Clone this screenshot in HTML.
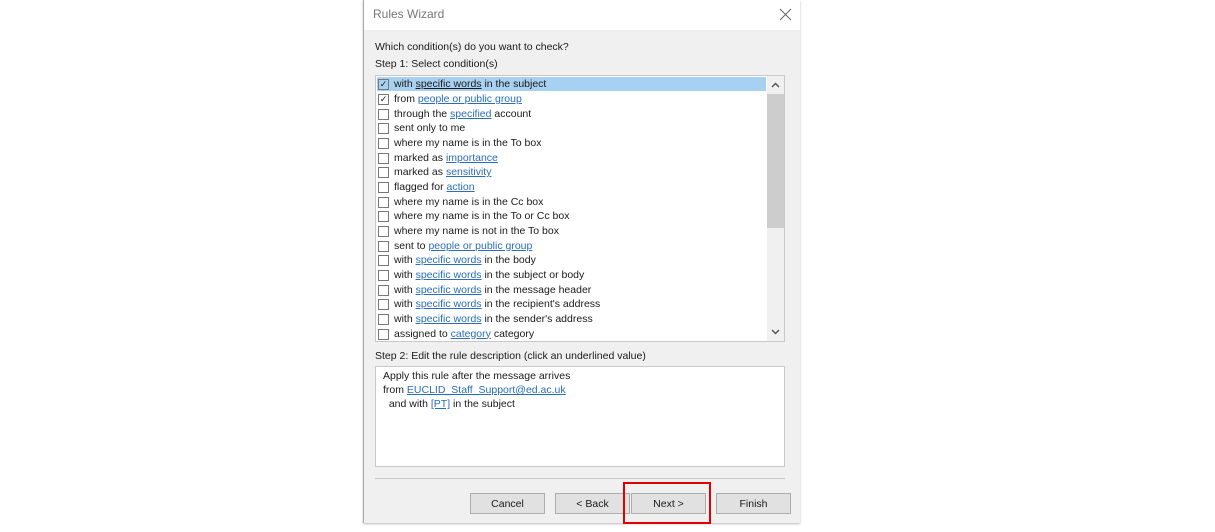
<!DOCTYPE html>
<html><head><style>
body{margin:0;width:1215px;height:532px;background:#fff;position:relative;overflow:hidden;font-family:"Liberation Sans",sans-serif;font-size:10.5px;color:#1a1a1a}
.dlg{position:absolute;left:363px;top:0;width:436px;height:523px;background:#f0f0f0;border-left:1px solid #aaa;box-shadow:0 1px 2px #bbb}
.title{position:absolute;left:0;top:0;width:436px;height:30px;background:#fff}
.title span{position:absolute;left:9px;top:7px;font-size:12px;color:#777}
.abs{position:absolute}
.list{position:absolute;left:11px;top:75px;width:408px;height:265px;background:#fff;border:1px solid #c8c8c8}
.row{position:absolute;left:1px;height:14px;width:389px;line-height:14px;white-space:nowrap}
.row.sel{background:#a8d0f0}
.cb{position:absolute;left:1px;top:2px;width:9px;height:9px;border:1px solid #777;background:#fff;font-size:9px;line-height:9px;text-align:center}
.sel .cb{background:transparent}
.row .t{position:absolute;left:17px}
a{color:#2a6db8;text-decoration:underline}
.sel a{color:#1a1a1a}
.sb{position:absolute;left:391px;top:0;width:17px;height:265px;background:#f0f0f0}
.thumb{position:absolute;left:0;top:18px;width:17px;height:134px;background:#cdcdcd}
.desc{position:absolute;left:11px;top:366px;width:410px;height:101px;background:#fff;border:1px solid #c8c8c8;line-height:14px;padding:2px 7px;box-sizing:border-box}
.btn{position:absolute;top:493px;width:75px;height:21px;background:#e1e1e1;border:1px solid #adadad;text-align:center;line-height:20px;box-sizing:border-box}
</style></head><body>
<div class="dlg">
<div class="title"><span>Rules Wizard</span>
<svg class="abs" style="left:415px;top:8px" width="13" height="13"><path d="M1 1L12 12M12 1L1 12" stroke="#666" stroke-width="1"/></svg></div>
<div class="abs" style="left:11px;top:41px">Which condition(s) do you want to check?</div>
<div class="abs" style="left:11px;top:58px">Step 1: Select condition(s)</div>
<div class="list">
<div class="row sel" style="top:1px"><span class="cb">✓</span><span class="t">with <a>specific words</a> in the subject</span></div>
<div class="row" style="top:16px"><span class="cb">✓</span><span class="t">from <a>people or public group</a></span></div>
<div class="row" style="top:30.6px"><span class="cb"></span><span class="t">through the <a>specified</a> account</span></div>
<div class="row" style="top:45.3px"><span class="cb"></span><span class="t">sent only to me</span></div>
<div class="row" style="top:60px"><span class="cb"></span><span class="t">where my name is in the To box</span></div>
<div class="row" style="top:74.6px"><span class="cb"></span><span class="t">marked as <a>importance</a></span></div>
<div class="row" style="top:89.3px"><span class="cb"></span><span class="t">marked as <a>sensitivity</a></span></div>
<div class="row" style="top:104px"><span class="cb"></span><span class="t">flagged for <a>action</a></span></div>
<div class="row" style="top:118.6px"><span class="cb"></span><span class="t">where my name is in the Cc box</span></div>
<div class="row" style="top:133.3px"><span class="cb"></span><span class="t">where my name is in the To or Cc box</span></div>
<div class="row" style="top:148px"><span class="cb"></span><span class="t">where my name is not in the To box</span></div>
<div class="row" style="top:162.6px"><span class="cb"></span><span class="t">sent to <a>people or public group</a></span></div>
<div class="row" style="top:177.3px"><span class="cb"></span><span class="t">with <a>specific words</a> in the body</span></div>
<div class="row" style="top:192px"><span class="cb"></span><span class="t">with <a>specific words</a> in the subject or body</span></div>
<div class="row" style="top:206.6px"><span class="cb"></span><span class="t">with <a>specific words</a> in the message header</span></div>
<div class="row" style="top:221.3px"><span class="cb"></span><span class="t">with <a>specific words</a> in the recipient's address</span></div>
<div class="row" style="top:236px"><span class="cb"></span><span class="t">with <a>specific words</a> in the sender's address</span></div>
<div class="row" style="top:250.6px"><span class="cb"></span><span class="t">assigned to <a>category</a> category</span></div>
<div class="sb"><div class="thumb"></div>
<svg class="abs" style="left:4px;top:6px" width="9" height="6"><path d="M1 5L4.5 1.5L8 5" stroke="#555" stroke-width="1.5" fill="none"/></svg>
<svg class="abs" style="left:4px;top:253px" width="9" height="6"><path d="M1 1L4.5 4.5L8 1" stroke="#555" stroke-width="1.5" fill="none"/></svg>
</div></div>
<div class="abs" style="left:11px;top:350px">Step 2: Edit the rule description (click an underlined value)</div>
<div class="desc">Apply this rule after the message arrives<br>from <a>EUCLID_Staff_Support@ed.ac.uk</a><br>&nbsp; and with <a>[PT]</a> in the subject</div>
<div class="abs" style="left:11px;top:478px;width:410px;height:1px;background:#c8c8c8"></div>
<div class="btn" style="left:106px">Cancel</div>
<div class="btn" style="left:191px">&lt; Back</div>
<div class="btn" style="left:267px">Next &gt;</div>
<div class="btn" style="left:352px">Finish</div>
</div>
<div class="abs" style="left:623px;top:482px;width:84px;height:38px;border:2px solid #e00000"></div>
</body></html>
